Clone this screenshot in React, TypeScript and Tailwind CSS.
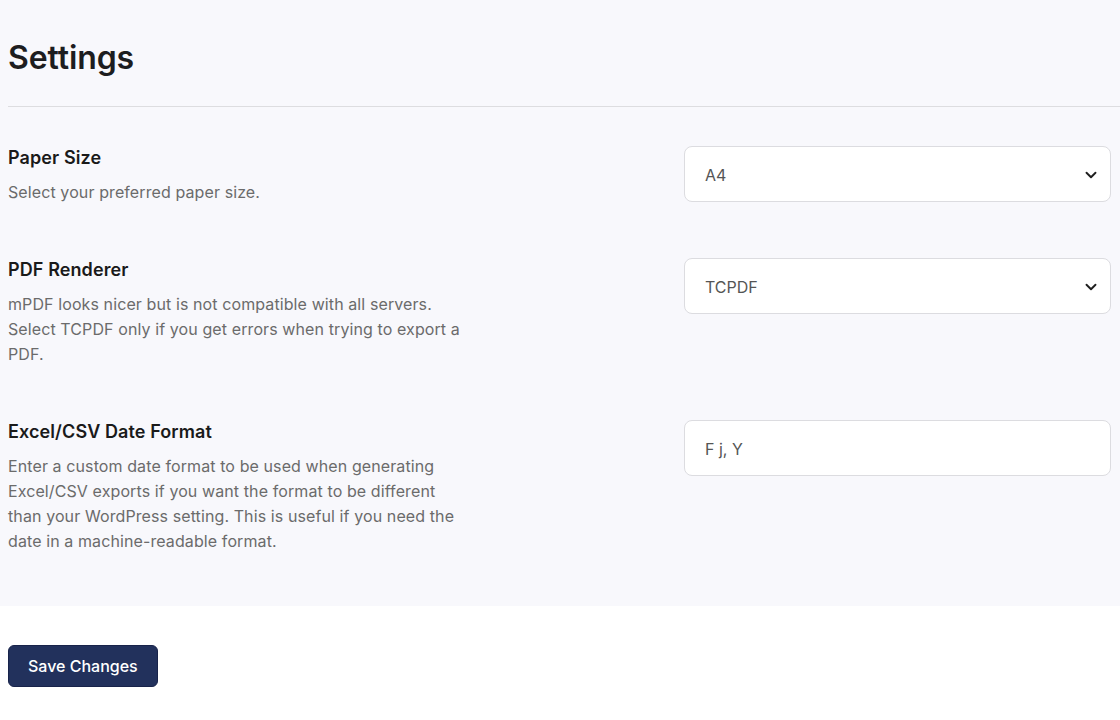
import React from 'react';

type Field = {
  title: string;
  description: string;
  kind: 'select' | 'text';
  value: string;
};

const fields: Field[] = [
  {
    title: 'Paper Size',
    description: 'Select your preferred paper size.',
    kind: 'select',
    value: 'A4',
  },
  {
    title: 'PDF Renderer',
    description:
      'mPDF looks nicer but is not compatible with all servers. Select TCPDF only if you get errors when trying to export a PDF.',
    kind: 'select',
    value: 'TCPDF',
  },
  {
    title: 'Excel/CSV Date Format',
    description:
      'Enter a custom date format to be used when generating Excel/CSV exports if you want the format to be different than your WordPress setting. This is useful if you need the date in a machine-readable format.',
    kind: 'text',
    value: 'F j, Y',
  },
];

function Chevron() {
  return (
    <svg width="12" height="8" viewBox="0 0 12 8" fill="none" className="shrink-0">
      <path d="M1.5 1.75 6 6.25l4.5-4.5" stroke="#1f1f1f" strokeWidth="1.9" strokeLinecap="round" strokeLinejoin="round" />
    </svg>
  );
}

function FieldControl({ field }: { field: Field }) {
  return (
    <div className="flex h-[56px] w-[427px] shrink-0 items-center justify-between rounded-lg border border-[#dcdce0] bg-white pl-5 pr-[13px] pt-px text-base text-[#555555]">
      <span>{field.value}</span>
      {field.kind === 'select' && <Chevron />}
    </div>
  );
}

export default function App() {
  return (
    <div className="min-h-screen bg-white font-['Inter',sans-serif]">
      <div className="bg-[#f8f8fc] pb-[27px]">
        {/* Page header */}
        <div className="ml-2 border-b border-[#dddde0] pt-10 pb-[30px]">
          <h1 className="text-[32px] font-semibold leading-9 tracking-[-0.1px] text-[#1d1d1f]">Settings</h1>
        </div>

        {/* Settings rows */}
        <div className="pt-[11px]">
          {fields.map((field) => (
            <div key={field.title} className="flex items-start justify-between pt-7 pb-[25px] pl-2 pr-[9px]">
              <div className="w-[456px]">
                <h2 className="mb-[10px] text-lg font-semibold leading-6 tracking-[0.1px] text-[#1a1a1a]">{field.title}</h2>
                <p className="text-base leading-[25px] tracking-[0.1px] text-[#6b6b6b]">{field.description}</p>
              </div>
              <FieldControl field={field} />
            </div>
          ))}
        </div>
      </div>

      <div className="pl-2 pt-[39px]">
        <button className="h-[42px] rounded-md border border-[#18234a] bg-[#22315c] px-[19px] text-base font-medium text-white">
          Save Changes
        </button>
      </div>
    </div>
  );
}
